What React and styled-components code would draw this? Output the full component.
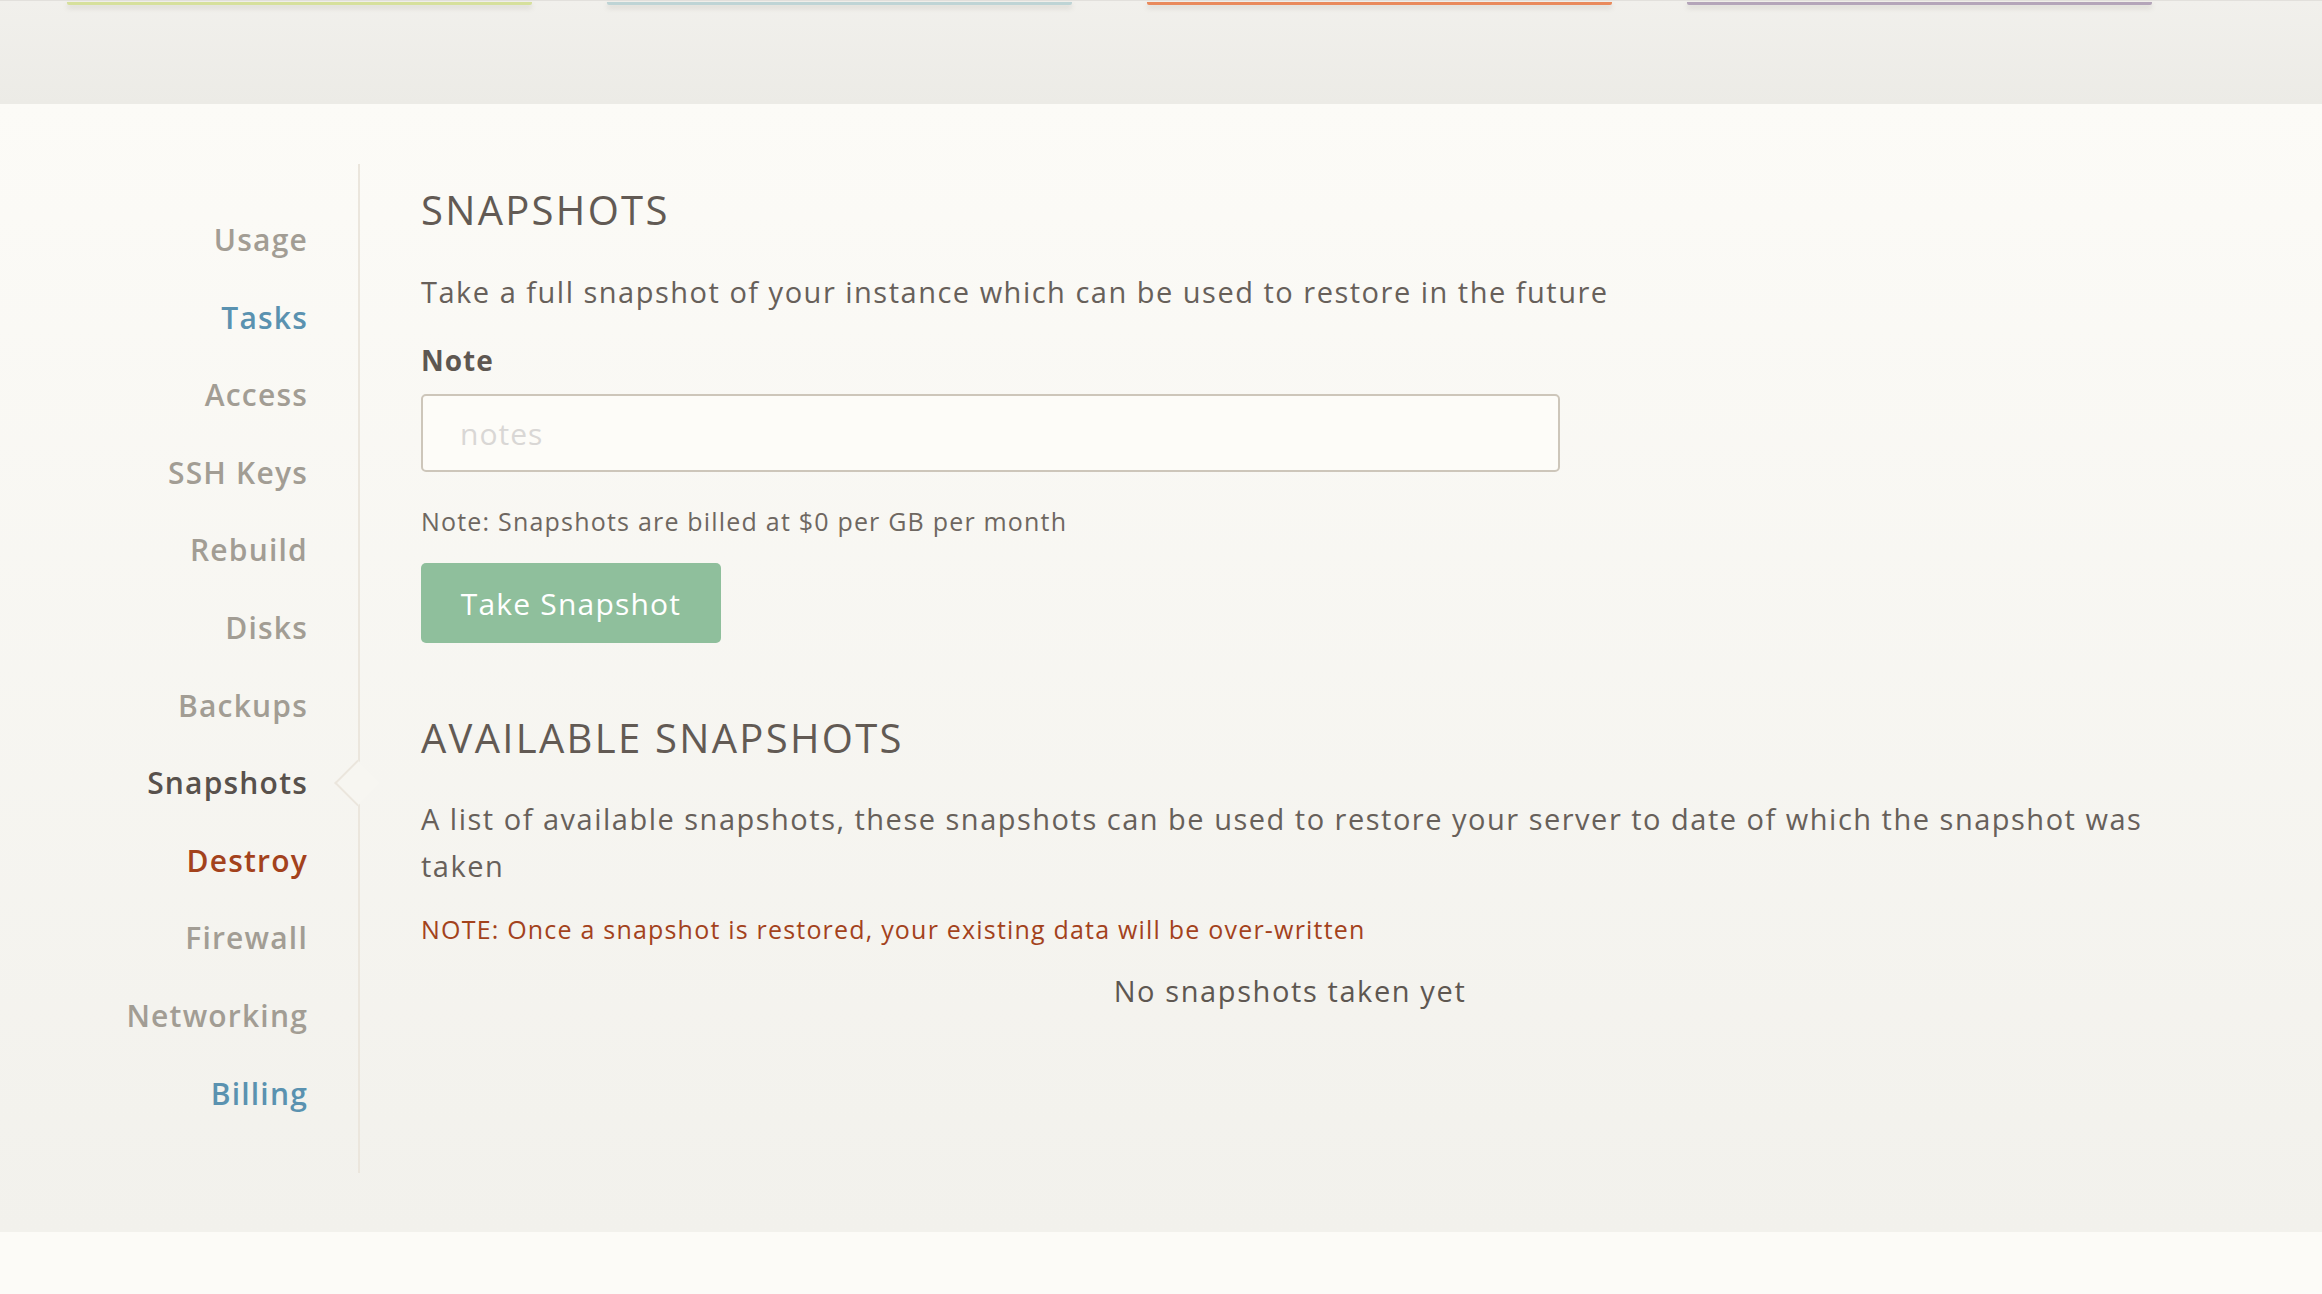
import React from 'react'
import styled, { createGlobalStyle } from 'styled-components'

const navItems = [
  { label: 'Usage', tone: 'muted' },
  { label: 'Tasks', tone: 'link' },
  { label: 'Access', tone: 'muted' },
  { label: 'SSH Keys', tone: 'muted' },
  { label: 'Rebuild', tone: 'muted' },
  { label: 'Disks', tone: 'muted' },
  { label: 'Backups', tone: 'muted' },
  { label: 'Snapshots', tone: 'active' },
  { label: 'Destroy', tone: 'danger' },
  { label: 'Firewall', tone: 'muted' },
  { label: 'Networking', tone: 'muted' },
  { label: 'Billing', tone: 'link' },
]

const tabColors = ['#d6e09c', '#bed4d5', '#e98a5c', '#b4a5b9']

const toneColors = {
  muted: '#a29d94',
  link: '#5a92b0',
  active: '#58514c',
  danger: '#a3421c',
}

export default function App() {
  return (
    <Page>
      <GlobalStyle />
      <Header>
        {tabColors.map((c) => (
          <Tab key={c} color={c} />
        ))}
      </Header>
      <Main>
        <Sidebar>
          {navItems.map((item) => (
            <NavItem key={item.label} tone={item.tone} $active={item.tone === 'active'}>
              {item.label}
            </NavItem>
          ))}
        </Sidebar>
        <Content>
          <Heading>SNAPSHOTS</Heading>
          <Lead>Take a full snapshot of your instance which can be used to restore in the future</Lead>
          <Label htmlFor="note">Note</Label>
          <Input id="note" placeholder="notes" />
          <Hint>Note: Snapshots are billed at $0 per GB per month</Hint>
          <Button>Take Snapshot</Button>
          <Heading $second>AVAILABLE SNAPSHOTS</Heading>
          <Lead $second>
            A list of available snapshots, these snapshots can be used to restore your server to date of which the snapshot was taken
          </Lead>
          <Warning>NOTE: Once a snapshot is restored, your existing data will be over-written</Warning>
          <Empty>No snapshots taken yet</Empty>
        </Content>
      </Main>
      <Footer />
    </Page>
  )
}

////// STYLED COMPONENTS //////
const GlobalStyle = createGlobalStyle`
  html, body {
    margin: 0;
    padding: 0;
    background: #fcfbf7;
  }
  body {
    font-family: "Open Sans", "Noto Sans", sans-serif;
    color: #67605a;
  }
  * {
    box-sizing: border-box;
  }
`
const Page = styled.div`
  width: 100%;
  min-height: 1294px;
  display: flex;
  flex-direction: column;
`
const Header = styled.div`
  height: 104px;
  display: flex;
  gap: 75px;
  padding-left: 67px;
  border-top: 1px solid #e2e0dc;
  background: linear-gradient(#f1f0ec, #ecebe6);
`
const Tab = styled.div`
  width: 465px;
  height: 3px;
  margin-top: 1px;
  background: ${(p) => p.color};
  border-radius: 0 0 2px 2px;
  box-shadow: 0 3px 5px rgba(120, 115, 100, 0.22);
`
const Main = styled.div`
  display: flex;
  height: 1128px;
  padding-top: 60px;
  background: linear-gradient(#fcfbf7, #f2f1ec);
`
const Sidebar = styled.nav`
  width: 360px;
  height: 1009px;
  padding-top: 37px;
  padding-right: 50px;
  border-right: 2px solid #ebe6dd;
  display: flex;
  flex-direction: column;
  align-items: flex-end;
`
const NavItem = styled.a`
  position: relative;
  display: block;
  line-height: 77.6px;
  font-size: 30px;
  font-weight: 600;
  letter-spacing: 1.2px;
  color: ${(p) => toneColors[p.tone]};
  cursor: pointer;
  &::after {
    content: '';
    display: ${(p) => (p.$active ? 'block' : 'none')};
    position: absolute;
    right: -66px;
    top: 50%;
    width: 31px;
    height: 31px;
    transform: translateY(-50%) rotate(45deg);
    background: #f7f6f1;
    border-left: 2px solid #ebe6dd;
    border-bottom: 2px solid #ebe6dd;
  }
`
const Content = styled.section`
  width: 1821px;
  padding-left: 61px;
  padding-top: 22px;
  display: flex;
  flex-direction: column;
  align-items: flex-start;
`
const Heading = styled.h2`
  margin: ${(p) => (p.$second ? '71px 0 0' : '0')};
  font-size: 40px;
  line-height: 48px;
  font-weight: 400;
  letter-spacing: 2.3px;
  color: #625a54;
`
const Lead = styled.p`
  margin: ${(p) => (p.$second ? '33px 0 0' : '38px 0 0')};
  font-size: 29px;
  letter-spacing: 1.5px;
  line-height: ${(p) => (p.$second ? '47px' : '40px')};
  color: #67605a;
`
const Label = styled.label`
  margin-top: 30px;
  font-size: 28px;
  line-height: 36px;
  font-weight: 700;
  letter-spacing: 1px;
  color: #5e5751;
`
const Input = styled.input`
  margin-top: 16px;
  width: 1139px;
  height: 78px;
  padding: 0 37px;
  border: 2px solid #cdc6ba;
  border-radius: 5px;
  background: #fdfcf8;
  font-family: inherit;
  font-size: 30px;
  letter-spacing: 1px;
  color: #67605a;
  outline: none;
  &::placeholder {
    color: #d9d7d5;
  }
`
const Hint = styled.p`
  margin: 32px 0 0;
  font-size: 25px;
  letter-spacing: 1.2px;
  line-height: 34px;
  color: #6e6761;
`
const Button = styled.button`
  margin-top: 25px;
  width: 300px;
  height: 80px;
  border: none;
  border-radius: 5px;
  background: #8fbf9c;
  color: #ffffff;
  font-family: inherit;
  font-size: 30px;
  letter-spacing: 1.2px;
  cursor: pointer;
`
const Warning = styled.p`
  margin: 23px 0 0;
  font-size: 25px;
  letter-spacing: 1.2px;
  line-height: 34px;
  color: #a3421c;
`
const Empty = styled.p`
  align-self: stretch;
  text-align: center;
  margin: 25px 0 0;
  padding-right: 22px;
  font-size: 29px;
  letter-spacing: 1.6px;
  line-height: 40px;
  color: #5e5751;
`
const Footer = styled.div`
  flex: 1;
  background: #fcfbf7;
`
